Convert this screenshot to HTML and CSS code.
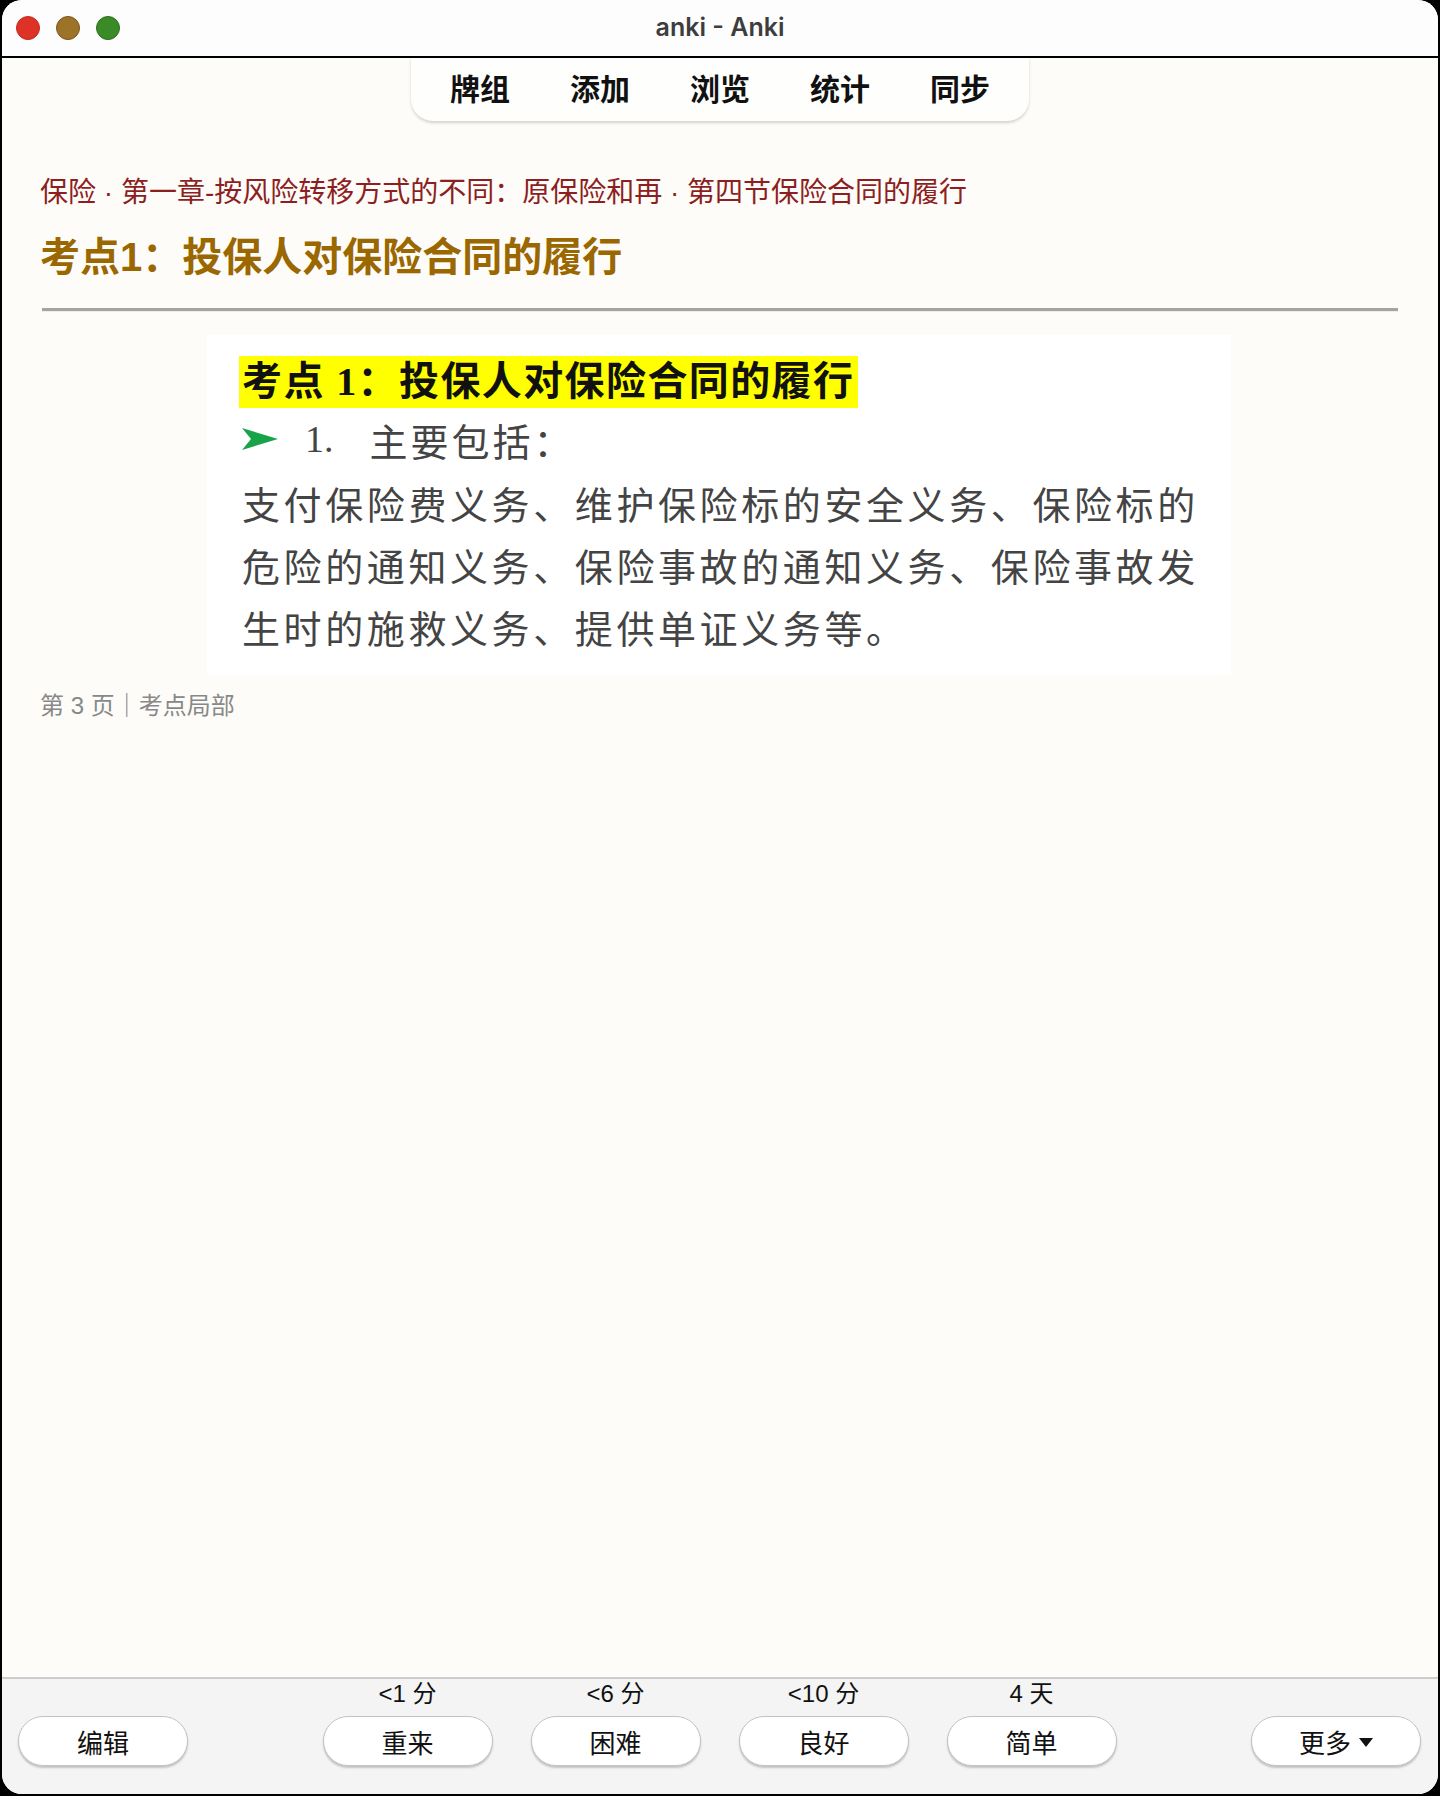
FILE: index.html
```html
<!DOCTYPE html>
<html lang="zh-CN">
<head>
<meta charset="utf-8">
<title>anki - Anki</title>
<link rel="stylesheet" href="styles.css">
</head>
<body>
<div class="window">
  <header class="titlebar">
    <div class="lights">
      <span class="light red"></span>
      <span class="light yellow"></span>
      <span class="light green"></span>
    </div>
    <div class="title">anki - Anki</div>
    <div class="spacer"></div>
  </header>

  <nav class="toolbar-wrap">
    <div class="toolbar">
      <a class="tab">牌组</a>
      <a class="tab">添加</a>
      <a class="tab">浏览</a>
      <a class="tab">统计</a>
      <a class="tab">同步</a>
    </div>
  </nav>

  <main class="content">
    <div class="crumb">保险 · 第一章-按风险转移方式的不同：原保险和再 · 第四节保险合同的履行</div>
    <h1 class="heading">考点1：投保人对保险合同的履行</h1>
    <hr class="rule">
    <div class="card">
      <div class="card-title"><span class="mark">考点 1：投保人对保险合同的履行</span></div>
      <div class="card-item">
        <svg class="arrow" width="36" height="24" viewBox="0 0 36 24"><path d="M0 1 L36 12 L0 23 L9 12 Z" fill="#18a34a"/></svg>
        <span class="num">1.</span>
        <span class="item-text">主要包括：</span>
      </div>
      <div class="card-line">支付保险费义务、维护保险标的安全义务、保险标的</div>
      <div class="card-line">危险的通知义务、保险事故的通知义务、保险事故发</div>
      <div class="card-line">生时的施救义务、提供单证义务等。</div>
    </div>
    <div class="meta">第 3 页｜考点局部</div>
  </main>

  <footer class="answerbar">
    <div class="side left">
      <button class="btn">编辑</button>
    </div>
    <div class="choices">
      <div class="choice"><span class="due">&lt;1 分</span><button class="btn">重来</button></div>
      <div class="choice"><span class="due">&lt;6 分</span><button class="btn">困难</button></div>
      <div class="choice"><span class="due">&lt;10 分</span><button class="btn">良好</button></div>
      <div class="choice"><span class="due">4 天</span><button class="btn">简单</button></div>
    </div>
    <div class="side right">
      <button class="btn more">更多<svg class="caret" width="14" height="9" viewBox="0 0 14 9"><path d="M0 0 H14 L7 9 Z" fill="#111"/></svg></button>
    </div>
  </footer>
</div>
</body>
</html>
```

FILE: styles.css
```css
html, body {
  margin: 0;
  padding: 0;
  background: #000;
  height: 100%;
  overflow: hidden;
}

.window {
  margin: 0 2px 2px 2px;
  height: calc(100vh - 2px);
  border-radius: 20px;
  overflow: hidden;
  background: #fdfcf8;
  display: flex;
  flex-direction: column;
  font-family: "Liberation Sans", "Noto Sans CJK SC", sans-serif;
}

/* ---------- title bar ---------- */
.titlebar {
  height: 56px;
  flex: none;
  background: #fdfdfd;
  border-bottom: 2px solid #000;
  display: grid;
  grid-template-columns: 1fr auto 1fr;
  align-items: center;
}

.lights {
  display: flex;
  gap: 16px;
  padding-left: 14px;
  margin-top: -1px;
}

.light {
  width: 22px;
  height: 22px;
  border-radius: 50%;
  border: 1px solid transparent;
}
.light.red { background: #df3226; border-color: #c0291f; }
.light.yellow { background: #9d7327; border-color: #7b5519; }
.light.green { background: #3b8a28; border-color: #2d6d1d; }

.title {
  font-family: "Inter", "Liberation Sans", sans-serif;
  font-weight: 600;
  font-size: 25px;
  color: #3d3d3d;
  margin-top: -3px;
}

/* ---------- toolbar ---------- */
.toolbar-wrap {
  flex: none;
  display: flex;
  justify-content: center;
}

.toolbar {
  width: 618px;
  height: 63px;
  box-sizing: border-box;
  background: #fefefc;
  border-radius: 0 0 22px 22px;
  box-shadow: 0 2px 3px rgba(0, 0, 0, 0.16);
  display: flex;
  justify-content: center;
  align-items: center;
  gap: 60px;
}

.tab {
  font-family: "Noto Sans CJK SC", sans-serif;
  font-weight: 700;
  font-size: 30px;
  line-height: 40px;
  color: #111;
  margin-top: -5px;
}

/* ---------- content ---------- */
.content {
  flex: 1;
  padding: 0 40px 0 38px;
}

.crumb {
  margin-top: 52px;
  font-family: "Liberation Sans", "Noto Sans CJK SC", sans-serif;
  font-size: 28px;
  line-height: 40px;
  color: #8c1f1f;
}

.heading {
  margin: 16px 0 0;
  font-family: "Liberation Sans", "Noto Sans CJK SC", sans-serif;
  font-weight: 700;
  font-size: 40px;
  line-height: 56px;
  color: #9a6700;
}

.rule {
  margin: 23px 0 0 2px;
  height: 0;
  border: none;
  border-top: 3px solid #a4a4a4;
  border-bottom: 1px solid #ececec;
}

.card {
  width: 1024px;
  height: 340px;
  box-sizing: border-box;
  margin: 23px auto 0;
  background: #fff;
  padding: 21px 0 0 32px;
  color: #3f3f3f;
  font-family: "Liberation Serif", "Noto Sans CJK SC", serif;
}

.card-title {
  height: 52px;
}

.mark {
  display: inline-block;
  background: #ffff00;
  height: 52px;
  line-height: 52px;
  padding: 0 4px 0 3px;
  font-family: "Liberation Serif", "Noto Sans CJK SC", serif;
  font-weight: 700;
  font-size: 40px;
  letter-spacing: 1.4px;
  color: #111;
}

.card-item {
  height: 62px;
  display: flex;
  align-items: center;
  padding-left: 3px;
  margin-bottom: 2px;
}

.arrow {
  flex: none;
}

.num {
  margin-left: 27px;
  font-size: 38px;
  color: #444;
}

.item-text {
  margin-left: 36px;
  font-family: "Noto Sans CJK SC", sans-serif;
  font-size: 38px;
  letter-spacing: 3px;
  color: #444;
}

.card-line {
  padding-left: 3px;
  height: 62px;
  line-height: 62px;
  font-family: "Noto Sans CJK SC", sans-serif;
  font-size: 38px;
  letter-spacing: 3.6px;
  color: #444;
  white-space: nowrap;
}

.meta {
  margin-top: 14px;
  font-family: "Liberation Sans", "Noto Sans CJK SC", sans-serif;
  font-size: 24px;
  line-height: 34px;
  color: #888;
}

/* ---------- answer bar ---------- */
.answerbar {
  flex: none;
  background: #f4f4f4;
  border-top: 2px solid #cdcdcd;
  padding: 1px 17px 28px 16px;
  display: grid;
  grid-template-columns: 1fr auto 1fr;
  align-items: end;
}

.side.right {
  display: flex;
  justify-content: flex-end;
}

.choices {
  display: flex;
  gap: 38px;
}

.choice {
  display: flex;
  flex-direction: column;
  align-items: center;
  gap: 8px;
}

.due {
  font-family: "Liberation Sans", "Noto Sans CJK SC", sans-serif;
  font-size: 24px;
  line-height: 28px;
  color: #111;
}

.btn {
  width: 170px;
  height: 50px;
  box-sizing: border-box;
  background: #fff;
  border: 1px solid #c3c3c3;
  border-radius: 26px;
  box-shadow: 0 2px 2px rgba(0, 0, 0, 0.2);
  font-family: "Noto Sans CJK SC", sans-serif;
  font-size: 26px;
  color: #111;
  display: flex;
  align-items: center;
  justify-content: center;
  padding: 0;
}

.btn.more {
  gap: 8px;
}

.caret {
  margin-top: 2px;
}
```
